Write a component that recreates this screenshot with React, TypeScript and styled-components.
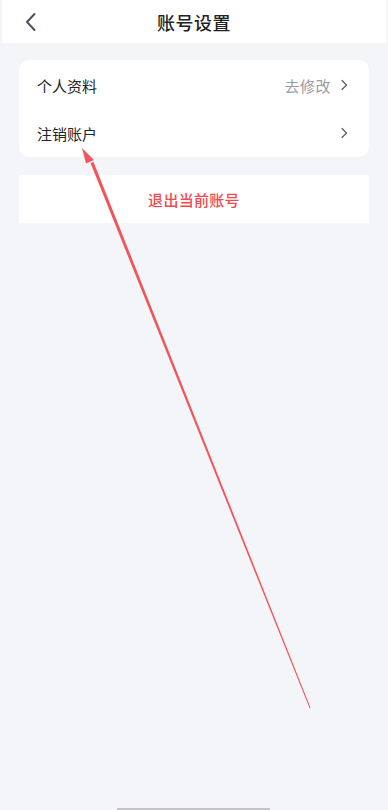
import React from "react";
import styled, { createGlobalStyle } from "styled-components";

const Global = createGlobalStyle`
  html, body { margin: 0; padding: 0; background: #f4f5f9; }
  body { font-family: "Noto Sans CJK SC", "Noto Sans", sans-serif; }
  #root { min-height: 810px; }
`;

const Page = styled.div`
  position: relative;
  width: 388px;
  height: 810px;
  background: #f4f5f9;
  overflow: hidden;
  display: flex;
  flex-direction: column;
  align-items: stretch;
`;

const Header = styled.header`
  height: 43px;
  margin: 0 2px;
  background: #ffffff;
  display: grid;
  grid-template-columns: 60px 1fr 60px;
  align-items: center;
`;

const BackBtn = styled.div`
  padding-left: 22px;
  display: flex;
  align-items: center;
`;

const Title = styled.h1`
  margin: 0;
  text-align: center;
  font-size: 18px;
  font-weight: 500;
  color: #222326;
  letter-spacing: 0.5px;
`;

const Content = styled.main`
  padding: 17px 19px 0 19px;
  display: flex;
  flex-direction: column;
  gap: 18px;
`;

const Card = styled.section`
  background: #ffffff;
  border-radius: 10px;
  padding: 1px 0 0;
`;

const Row = styled.div`
  height: 48px;
  padding: 0 21px 0 18px;
  display: flex;
  align-items: center;
  justify-content: space-between;
`;

const Label = styled.span`
  font-size: 15px;
  color: #232427;
`;

const Trail = styled.div`
  display: flex;
  align-items: center;
  gap: 9px;
`;

const Hint = styled.span`
  font-size: 15px;
  color: #9a9ba0;
  letter-spacing: 0.5px;
`;

const Logout = styled.button`
  height: 48px;
  border: none;
  background: #ffffff;
  color: #f0494f;
  font-family: inherit;
  font-size: 15px;
  font-weight: 500;
  letter-spacing: 0.3px;
  display: flex;
  align-items: center;
  justify-content: center;
`;

const Overlay = styled.svg`
  position: absolute;
  left: 0;
  top: 0;
  pointer-events: none;
`;

const HomeBar = styled.div`
  position: absolute;
  left: 117px;
  bottom: 0;
  width: 153px;
  height: 2px;
  background: #c4c4c8;
  border-radius: 1px 1px 0 0;
`;

const Chevron = () => (
  <svg width="8" height="12" viewBox="0 0 8 12">
    <path d="M2 1.5 L6.5 6 L2 10.5" fill="none" stroke="#606268" strokeWidth="1.3" strokeLinecap="round" strokeLinejoin="round" />
  </svg>
);

export default function App() {
  return (
    <Page>
      <Global />
      <Header>
        <BackBtn>
          <svg width="14" height="20" viewBox="0 0 14 20">
            <path d="M10.5 2 L3 10 L10.5 18" fill="none" stroke="#4a5260" strokeWidth="2" strokeLinecap="round" strokeLinejoin="round" />
          </svg>
        </BackBtn>
        <Title>账号设置</Title>
        <div />
      </Header>
      <Content>
        <Card>
          <Row>
            <Label>个人资料</Label>
            <Trail>
              <Hint>去修改</Hint>
              <Chevron />
            </Trail>
          </Row>
          <Row>
            <Label>注销账户</Label>
            <Trail>
              <Chevron />
            </Trail>
          </Row>
        </Card>
        <Logout>退出当前账号</Logout>
      </Content>
      <Overlay width="388" height="810" viewBox="0 0 388 810">
        <polygon points="90.5,163 93.5,162 310.6,708 309.6,708.3" fill="#f2545a" />
        <polygon points="82,148 94,160 86,163.5" fill="#f2545a" />
      </Overlay>
      <HomeBar />
    </Page>
  );
}
